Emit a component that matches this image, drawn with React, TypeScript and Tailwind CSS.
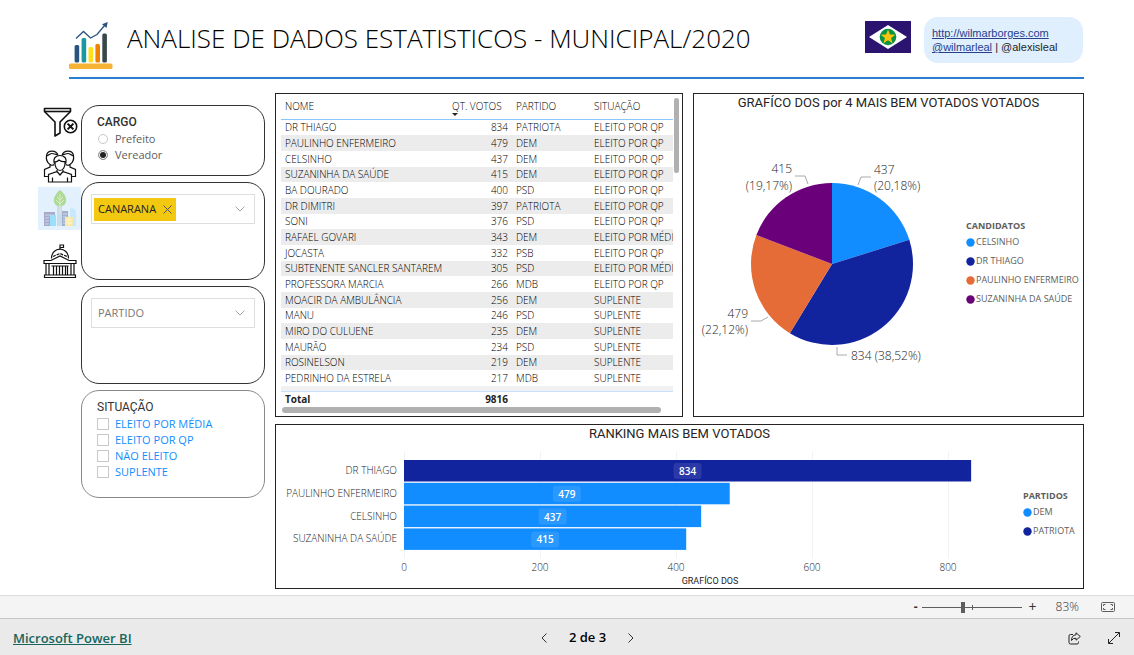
import React, { useState } from "react";

const candidates = [
  ["DR THIAGO", 834, "PATRIOTA", "ELEITO POR QP"],
  ["PAULINHO ENFERMEIRO", 479, "DEM", "ELEITO POR QP"],
  ["CELSINHO", 437, "DEM", "ELEITO POR QP"],
  ["SUZANINHA DA SAÚDE", 415, "DEM", "ELEITO POR QP"],
  ["BA DOURADO", 400, "PSD", "ELEITO POR QP"],
  ["DR DIMITRI", 397, "PATRIOTA", "ELEITO POR QP"],
  ["SONI", 376, "PSD", "ELEITO POR QP"],
  ["RAFAEL GOVARI", 343, "DEM", "ELEITO POR MÉDIA"],
  ["JOCASTA", 332, "PSB", "ELEITO POR QP"],
  ["SUBTENENTE SANCLER SANTAREM", 305, "PSD", "ELEITO POR MÉDIA"],
  ["PROFESSORA MARCIA", 266, "MDB", "ELEITO POR QP"],
  ["MOACIR DA AMBULÂNCIA", 256, "DEM", "SUPLENTE"],
  ["MANU", 246, "PSD", "SUPLENTE"],
  ["MIRO DO CULUENE", 235, "DEM", "SUPLENTE"],
  ["MAURÃO", 234, "PSD", "SUPLENTE"],
  ["ROSINELSON", 219, "DEM", "SUPLENTE"],
  ["PEDRINHO DA ESTRELA", 217, "MDB", "SUPLENTE"],
] as const;

function LogoIcon() {
  return (
    <svg viewBox="0 0 44 48" className="h-12 w-11" aria-hidden="true">
      <rect x="0" y="41.500" width="43.500" height="5.500" rx="1.500" fill="#f6b335" />
      <rect x="5.600" y="23" width="4.600" height="17.500" rx="1.500" fill="#28547f" />
      <rect x="12.600" y="16" width="4.600" height="24.500" rx="1.500" fill="#1a98a0" />
      <rect x="19.500" y="25" width="4.600" height="15.500" rx="1.500" fill="#ffe01b" />
      <rect x="26.400" y="22" width="4.600" height="18.500" rx="1.500" fill="#f08000" />
      <rect x="33.300" y="11.500" width="4.600" height="29" rx="1.500" fill="#37474a" />
      <path d="M7 16.500 14.500 9.500 21.500 16 28 12.500 36 3" fill="none" stroke="#28547f" strokeWidth="1.300" />
      <path d="M38.700 0 37.500 6 33 2.300Z" fill="#28547f" />
    </svg>
  );
}

function FlagIcon() {
  return (
    <svg viewBox="0 0 46 32" className="h-8 w-[46px]" role="img" aria-label="Bandeira de Mato Grosso">
      <rect width="46" height="32" fill="#2a1470" />
      <path d="M4 16 23 4 42 16 23 28Z" fill="#fff" />
      <circle cx="23" cy="16" r="8.300" fill="#0b9444" />
      <path d="M23 8.500 24.900 13.600 30.300 13.700 26 17.100 27.600 22.300 23 19.200 18.400 22.300 20 17.100 15.700 13.700 21.100 13.600Z" fill="#fcc40c" />
    </svg>
  );
}

function FilterIcon() {
  return (
    <svg viewBox="0 0 36 32" className="h-8 w-9" fill="none" stroke="#111" strokeWidth="1.600" aria-hidden="true">
      <path d="M2.500 3.500H28.500V6.500L18 17V28L13 31V17L2.500 6.500Z" strokeLinejoin="round" />
      <path d="M2.500 6.500H28.500" />
      <circle cx="28.500" cy="21.500" r="6.200" fill="#fff" />
      <path d="M25.600 18.600 31.400 24.400M31.400 18.600 25.600 24.400" strokeWidth="2" />
    </svg>
  );
}

function PeopleIcon() {
  return (
    <svg viewBox="0 0 34 34" className="h-[34px] w-[34px]" fill="none" stroke="#111" strokeWidth="1.200" aria-hidden="true">
      <path d="M12 13C11.500 17.500 14 21.500 17 21.500S22.500 17.500 22 13" />
      <path d="M11.500 15C9.500 9 13 6.500 17 6.500S24.500 9 22.500 15M11.500 12.500C13 13.500 15 12 16 11 18 12.500 20.500 13 22.500 12.500" />
      <path d="M15 6.500C13.500 1 4.500.500 3.500 6.500 3 10 4 13.500 7 15.500V18L1.500 20.500V27.500H6" />
      <path d="M3.500 7C6 6.500 7 4.500 9 4.500 11 4.500 12 5.500 14 5.500M7 15.500Q9 17 11 15.500" />
      <path d="M19 6.500C20.500 1 29.500.500 30.500 6.500 31 10 30 13.500 27 15.500V18L32.500 20.500V27.500H28" />
      <path d="M30.500 7C28 6.500 27 4.500 25 4.500 23 4.500 22 5.500 20 5.500M27 15.500Q25 17 23 15.500" />
      <path d="M14 21V22.500L5.500 25.500V33H28.500V25.500L20 22.500V21M14 22.500 17 26 20 22.500M9.500 28.500V33M24.500 28.500V33" />
    </svg>
  );
}

function CityIcon() {
  return (
    <svg viewBox="0 0 34 37" className="h-[37px] w-[34px]" aria-hidden="true">
      <rect x="1" y="22" width="11" height="14" fill="#a7a9c8" />
      <path d="M2 25H11M2 28H6M2 31H6M2 34H6" stroke="#d4d7eb" />
      <rect x="7" y="25" width="6" height="11" fill="#9be0fb" />
      <rect x="14" y="16" width="5" height="20" fill="#c9dcec" />
      <rect x="19" y="21" width="6" height="15" fill="#a3afd0" />
      <path d="M20 24H24M20 27H24M20 30H24M20 33H24" stroke="#d3dcee" />
      <path d="M27 18C31 18 33 20 33 23V36H27Z" fill="#c8e9fb" />
      <rect x="22" y="27" width="8" height="9" fill="#f9e9a8" />
      <path d="M23 30H29M23 33H29M26 28V35" stroke="#fff6cc" />
      <path d="M17 0C12 4 9 10 12 14 14 17 20 17 22 14 25 9 22 4 17 0Z" fill="#addb96" />
      <path d="M17 4V24M17 10 14 7M17 10 20 7M17 14 13 10M17 14 21 10" stroke="#dfeacb" fill="none" />
    </svg>
  );
}

function CapitolIcon() {
  return (
    <svg viewBox="0 0 34 34" className="h-[34px] w-[34px]" fill="none" stroke="#111" strokeWidth="1.200" aria-hidden="true">
      <path d="M17 5V1H20.500V3.500H17" />
      <path d="M8.500 14.500C8.500 2 25.500 2 25.500 14.500" />
      <path d="M10 12.500 17 9.500 24 12.500" strokeDasharray="3 1" />
      <path d="M1 16.500H8L17 12 26 16.500H33V19.500H1Z" />
      <path d="M3 19.500V31M6 19.500V31M28 19.500V31M31 19.500V31M1.500 31H32.500V33.500H1.500Z" />
      <path d="M10.500 22V31M13.500 22V31M16.500 22V31M19.500 22V31M22.500 22V31M24.500 22V31M8.500 22H25.500" />
    </svg>
  );
}

function Chevron({ className }: { className: string }) {
  return (
    <svg viewBox="0 0 10 6" className={className} fill="none" stroke="#aaa" aria-hidden="true">
      <path d="M.5.500 5 5 9.500.500" />
    </svg>
  );
}

const CX = 138;
const CY = 152;
const R = 81;
const slices = [
  { name: "CELSINHO", value: 437, color: "#118dff" },
  { name: "DR THIAGO", value: 834, color: "#12239e" },
  { name: "PAULINHO ENFERMEIRO", value: 479, color: "#e66c37" },
  { name: "SUZANINHA DA SAÚDE", value: 415, color: "#6b007b" },
];

function PieChart() {
  const total = slices.reduce((sum, s) => sum + s.value, 0);
  let start = 0;
  return (
    <svg viewBox="0 0 265 304" className="min-w-0 flex-1 text-[12px]" role="img" aria-label="Votos por candidato">
      {slices.map((s) => {
        const end = start + (s.value / total) * Math.PI * 2;
        const large = end - start > Math.PI ? 1 : 0;
        const d = `M${CX} ${CY}L${CX + R * Math.sin(start)} ${CY - R * Math.cos(start)}A${R} ${R} 0 ${large} 1 ${CX + R * Math.sin(end)} ${CY - R * Math.cos(end)}Z`;
        start = end;
        return <path key={s.name} d={d} fill={s.color} />;
      })}
      <g fill="none" stroke="#aaa">
        <path d="M164 73 167 65H177" />
        <path d="M114 72 111 64H101" />
        <path d="M74 205 67 209H57" />
        <path d="M143 235V243H153" />
      </g>
      <g fill="#252423">
        <text x="180" y="62">437</text>
        <text x="180" y="78">(20,18%)</text>
        <g textAnchor="end">
          <text x="98" y="61">415</text>
          <text x="98" y="78">(19,17%)</text>
          <text x="54" y="206">479</text>
          <text x="54" y="222">(22,12%)</text>
        </g>
        <text x="157" y="248">834 (38,52%)</text>
      </g>
    </svg>
  );
}

const bars = [
  { name: "DR THIAGO", value: 834, color: "#12239e" },
  { name: "PAULINHO ENFERMEIRO", value: 479, color: "#118dff" },
  { name: "CELSINHO", value: 437, color: "#118dff" },
  { name: "SUZANINHA DA SAÚDE", value: 415, color: "#118dff" },
];

function BarChart() {
  const scale = 0.68;
  return (
    <svg viewBox="0 0 740 145" className="min-w-0 flex-1 text-[10px]" role="img" aria-label="Ranking de votos">
      {[0, 200, 400, 600, 800].map((t) => (
        <g key={t}>
          <path d={`M${128.5 + t * scale} 8V115`} stroke="#f3f3f3" />
          <text x={128 + t * scale} y="128" textAnchor="middle" fill="#252423">{t}</text>
        </g>
      ))}
      {bars.map((b, i) => {
        const y = 17 + i * 22.8;
        const mid = 128 + (b.value * scale) / 2;
        return (
          <g key={b.name}>
            <text x="121" y={y + 14} textAnchor="end" fill="#252423">{b.name}</text>
            <rect x="128" y={y} width={b.value * scale} height="21.500" fill={b.color} />
            <rect x={mid - 14} y={y + 3} width="28" height="16" rx="3" fill="#fff" fillOpacity=".1" />
            <text x={mid} y={y + 15} textAnchor="middle" fill="#fff" fontWeight="600">{b.value}</text>
          </g>
        );
      })}
      <text x="434" y="141" textAnchor="middle" fill="#252423" className="font-['Roboto',sans-serif] text-[9px] font-normal">GRAFÍCO DOS</text>
    </svg>
  );
}

function Legend({ title, items }: { title: string; items: { name: string; color: string }[] }) {
  return (
    <div className="text-[9px] leading-4 font-normal text-[#605e5c]">
      <h3 className="font-bold">{title}</h3>
      <ul className="flex flex-col gap-[3px]">
        {items.map((i) => (
          <li key={i.name} className="flex items-center gap-px whitespace-nowrap">
            <svg viewBox="0 0 9 9" className="size-[9px] shrink-0" aria-hidden="true">
              <circle cx="4.500" cy="4.500" r="4.200" fill={i.color} />
            </svg>
            {i.name}
          </li>
        ))}
      </ul>
    </div>
  );
}

function ResultsTable() {
  return (
    <section className="relative w-[408px] shrink-0 border border-[#252423] pt-1 pr-1 pb-[3px] pl-[5px]">
      <div className="mr-[5px] overflow-hidden">
        <table className="h-[309px] w-full table-fixed border-collapse text-left text-[10px] leading-[14px] text-black">
          <colgroup>
            <col className="w-[167px]" />
            <col className="w-16" />
            <col className="w-[78px]" />
            <col />
          </colgroup>
          <thead>
            <tr className="h-[21px]">
              <th scope="col" className="border-b border-[#8ac6ff] pb-1 pl-1 font-light">NOME</th>
              <th scope="col" className="relative border-b border-[#8ac6ff] pb-1 pl-1 font-light whitespace-nowrap">
                QT. VOTOS
                <svg viewBox="0 0 6 3" className="absolute bottom-[3px] left-1 h-[3px] w-1.5" aria-hidden="true">
                  <path d="M0 0H6L3 3Z" fill="#252423" />
                </svg>
              </th>
              <th scope="col" className="border-b border-[#8ac6ff] pb-1 pl-1 font-light">PARTIDO</th>
              <th scope="col" className="border-b border-[#8ac6ff] pb-1 pl-1 font-light">SITUAÇÃO</th>
            </tr>
          </thead>
          <tbody>
            {candidates.map(([name, votes, party, status]) => (
              <tr key={name} className="even:bg-[#ececec]">
                <td className="pl-1 whitespace-nowrap">{name}</td>
                <td className="pr-1 text-right">{votes}</td>
                <td className="pl-1">{party}</td>
                <td className="overflow-hidden pl-1 whitespace-nowrap">{status}</td>
              </tr>
            ))}
          </tbody>
          <tfoot>
            <tr className="h-[5px] bg-[#f1f1f1]">
              <td colSpan={4} className="border-b border-[#c4e2fb] p-0" />
            </tr>
            <tr className="h-4 font-bold text-[#252423]">
              <td className="pl-1">Total</td>
              <td className="pr-1 text-right">9816</td>
              <td />
              <td />
            </tr>
          </tfoot>
        </table>
      </div>
      <div className="absolute top-1 right-[3px] h-[75px] w-[5px] rounded-full bg-[#b0b0b0]" />
      <div className="ml-px h-1.5 w-[379px] rounded-full bg-[#b0b0b0]" />
    </section>
  );
}

export default function App() {
  const [cargo, setCargo] = useState("Vereador");
  const [zoom, setZoom] = useState(41);
  return (
    <div className="flex min-h-screen flex-col bg-white font-['Open_Sans','Noto_Sans',sans-serif] font-light text-[#252423]">
      <main className="flex-1 pr-[50px] pl-[38px]">
        <header className="ml-[31px] flex h-[79px] items-start border-b-2 border-[#2b7fd0] pr-px">
          <div className="mt-[22px]"><LogoIcon /></div>
          <h1 className="mt-5 ml-[14px] flex-1 text-[26px] leading-9 whitespace-nowrap text-black">
            ANALISE DE DADOS ESTATISTICOS - MUNICIPAL/2020
          </h1>
          <div className="mt-[21px] mr-[13px]"><FlagIcon /></div>
          <p className="mt-[17px] h-[46px] w-[159px] rounded-[14px] bg-[#e0effe] px-2 pt-[9px] font-['Liberation_Sans',sans-serif] text-[11px] leading-[14px] font-normal text-[#252423]">
            <a href="http://wilmarborges.com" className="text-[#26408b] underline">http://wilmarborges.com</a>
            <br />
            <a href="#wilmarleal" className="text-[#26408b] underline">@wilmarleal</a> | @alexisleal
          </p>
        </header>

        <div className="flex pt-[14px] pb-1.5">
          <nav className="flex w-[43px] shrink-0 flex-col items-center pt-3">
            <button aria-label="Limpar filtros" className="mb-3"><FilterIcon /></button>
            <button aria-label="Candidatos" className="mb-1"><PeopleIcon /></button>
            <button aria-label="Municípios" className="mb-3.5 flex h-[43px] w-full items-center justify-center bg-[#e3f0fd]"><CityIcon /></button>
            <button aria-label="Governo"><CapitolIcon /></button>
          </nav>

          <aside className="mr-[10px] flex w-[184px] shrink-0 flex-col gap-[6px] pt-3">
            <fieldset className="h-[71px] rounded-[18px] border border-[#333] pt-2 pl-[15px] text-[11px] leading-4 font-normal text-[#605e5c]">
              <legend className="float-left w-full font-['Roboto',sans-serif] text-[12px] leading-[17px] font-medium text-[#333]">CARGO</legend>
              {["Prefeito", "Vereador"].map((c) => (
                <label key={c} className="clear-both flex h-4 items-center gap-[7px]">
                  <input
                    type="radio"
                    name="cargo"
                    checked={cargo === c}
                    onChange={() => setCargo(c)}
                    className="ml-px size-[10px] appearance-none rounded-full border border-[#c8c8c8] bg-white checked:border-[#999] checked:bg-[#222] checked:shadow-[inset_0_0_0_1px_white]"
                  />
                  {c}
                </label>
              ))}
            </fieldset>

            <section className="h-[98px] rounded-[18px] border border-[#333] px-[9px] pt-[11px]">
              <div className="flex h-[30px] items-center border border-[#dedede] pl-0.5">
                <span className="flex h-[23px] items-center gap-[7px] bg-[#f2c811] px-1 text-[11px] font-normal text-[#252423]">
                  CANARANA
                  <button aria-label="Remover CANARANA">
                    <svg viewBox="0 0 9 9" className="size-[9px]" stroke="#555" aria-hidden="true"><path d="M.5.500 8.500 8.500M8.500.500.500 8.500" /></svg>
                  </button>
                </span>
                <button aria-label="Abrir municípios" className="mr-[9px] ml-auto"><Chevron className="h-1.5 w-2.5" /></button>
              </div>
            </section>

            <section className="h-[98px] rounded-[18px] border border-[#333] px-[9px] pt-[11px]">
              <div className="relative">
                <select aria-label="Partido" className="h-[30px] w-full appearance-none border border-[#dedede] bg-white px-1.5 text-[11px] font-normal text-[#777]">
                  <option>PARTIDO</option>
                </select>
                <Chevron className="pointer-events-none absolute top-3 right-[10px] h-1.5 w-2.5" />
              </div>
            </section>

            <fieldset className="h-[108px] rounded-[18px] border border-[#888] pt-2 pl-[15px] text-[11px] leading-4 font-normal text-[#118dff]">
              <legend className="float-left w-full font-['Roboto',sans-serif] text-[12px] leading-[17px] text-[#333]">SITUAÇÃO</legend>
              {["ELEITO POR MÉDIA", "ELEITO POR QP", "NÃO ELEITO", "SUPLENTE"].map((s) => (
                <label key={s} className="clear-both flex h-4 items-center gap-1.5">
                  <input type="checkbox" className="size-3 appearance-none border border-[#c8c8c8] bg-white checked:bg-[#118dff]" />
                  {s}
                </label>
              ))}
            </fieldset>
          </aside>

          <div className="flex min-w-0 flex-1 flex-col gap-[7px]">
            <div className="flex h-[324px] gap-[10px]">
              <ResultsTable />
              <section className="flex min-w-0 flex-1 flex-col border border-[#252423]">
                <h2 className="text-center font-['Roboto',sans-serif] text-[13px] leading-[18px] font-normal whitespace-nowrap">
                  GRAFÍCO DOS por 4 MAIS BEM VOTADOS VOTADOS
                </h2>
                <div className="flex min-h-0 flex-1">
                  <PieChart />
                  <div className="w-[124px] shrink-0 pt-[106px] pl-[7px]"><Legend title="CANDIDATOS" items={slices} /></div>
                </div>
              </section>
            </div>
            <section className="flex h-[165px] flex-col border border-[#252423]">
              <h2 className="text-center font-['Roboto',sans-serif] text-[13px] leading-[18px] font-normal">RANKING MAIS BEM VOTADOS</h2>
              <div className="flex min-h-0 flex-1">
                <BarChart />
                <div className="w-[67px] shrink-0 pt-[45px] pl-[7px]">
                  <Legend title="PARTIDOS" items={[{ name: "DEM", color: "#118dff" }, { name: "PATRIOTA", color: "#12239e" }]} />
                </div>
              </div>
            </section>
          </div>
        </div>
      </main>

      <div className="flex h-[23px] items-center justify-end border-t border-[#dcdcdc] bg-[#f4f4f4] pr-[19px] text-[12px] text-[#333]">
        <button aria-label="Reduzir" className="mr-1 font-bold">-</button>
        <div className="relative flex h-4 w-[100px] items-center">
          <input
            type="range"
            aria-label="Zoom"
            value={zoom}
            onChange={(e) => setZoom(Number(e.target.value))}
            className="h-px w-full appearance-none bg-[#605e5c] [&::-webkit-slider-thumb]:h-[11px] [&::-webkit-slider-thumb]:w-1 [&::-webkit-slider-thumb]:appearance-none [&::-webkit-slider-thumb]:bg-[#605e5c]"
          />
          <span className="pointer-events-none absolute top-[6px] left-[50px] h-[5px] w-px bg-[#605e5c]" />
        </div>
        <button aria-label="Ampliar" className="ml-[7px] text-[14px] leading-4 font-normal">+</button>
        <span className="ml-[19px]">83%</span>
        <button aria-label="Ajustar à página" className="ml-[22px]">
          <svg viewBox="0 0 14 10" className="h-2.5 w-3.5" fill="none" stroke="#605e5c" aria-hidden="true">
            <rect x=".5" y=".5" width="13" height="9" rx="1" />
            <path d="M4.500 2.500H2.500V4M2.500 6V7.500H4.500M9.500 2.500H11.500V4M11.500 6V7.500H9.500" />
          </svg>
        </button>
      </div>

      <footer className="grid h-[37px] grid-cols-[1fr_auto_1fr] items-center border-t border-[#c6c6c6] bg-[#eaeaea] pr-[14px] pl-[13px]">
        <a href="https://powerbi.microsoft.com" className="justify-self-start pt-1 text-[13px] font-semibold text-[#17655c] underline">Microsoft Power BI</a>
        <div className="flex items-center gap-[22px] pt-px pl-[42px] text-[13px] font-semibold text-black">
          <button aria-label="Página anterior">
            <svg viewBox="0 0 6 10" className="h-2.5 w-1.5" fill="none" stroke="#333" aria-hidden="true"><path d="M5.500.500 1 5 5.500 9.500" /></svg>
          </button>
          <span>2 de 3</span>
          <button aria-label="Próxima página">
            <svg viewBox="0 0 6 10" className="h-2.5 w-1.5" fill="none" stroke="#333" aria-hidden="true"><path d="M.5.500 5 5 .5 9.500" /></svg>
          </button>
        </div>
        <div className="flex items-center gap-[27px] justify-self-end pt-0.5">
          <button aria-label="Compartilhar">
            <svg viewBox="0 0 13 13" className="size-[13px]" fill="none" stroke="#222" strokeLinejoin="round" aria-hidden="true">
              <path d="M5 2.500H2.500Q1 2.500 1 4V10.500Q1 12 2.500 12H9Q10.500 12 10.500 10.500V9.500" />
              <path d="M8 .8 12.300 4.500 8 8.200V6.200Q5 6 3.500 8.500 3.500 3.200 8 2.800Z" />
            </svg>
          </button>
          <button aria-label="Tela cheia">
            <svg viewBox="0 0 12 12" className="size-3" fill="none" stroke="#222" aria-hidden="true">
              <path d="M.8 11.200 11.200.8M7 .5H11.500V5M.5 7V11.500H5" />
            </svg>
          </button>
        </div>
      </footer>
    </div>
  );
}
